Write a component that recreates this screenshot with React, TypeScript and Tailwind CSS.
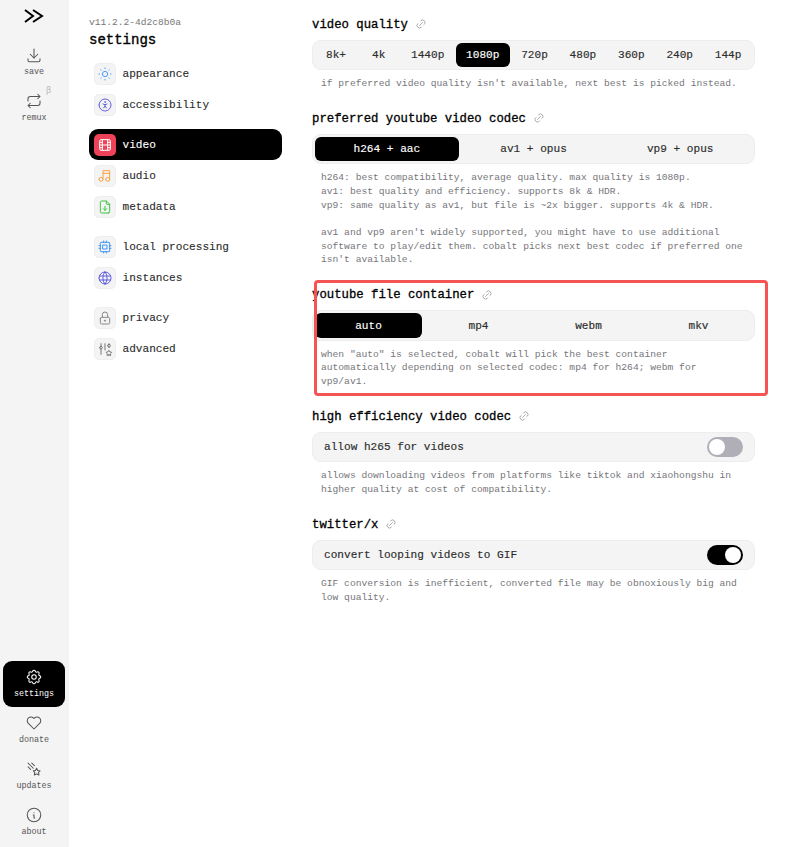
import type { ReactNode } from 'react';
import {
  TbAccessible, TbAdjustmentsStar, TbComet, TbCpu, TbDownload, TbFileDownload, TbHeart,
  TbInfoCircle, TbLink, TbLock, TbMovie, TbMusic, TbRepeat, TbSettings, TbSun, TbWorld,
} from 'react-icons/tb';

const QUALITIES = ['8k+', '4k', '1440p', '1080p', '720p', '480p', '360p', '240p', '144p'];

function SideItem({ icon, label, active, beta }: { icon: ReactNode; label: string; active?: boolean; beta?: boolean }) {
  return (
    <div className={`relative mx-[3px] flex h-[46px] flex-col items-center justify-center gap-[3px] rounded-[9px] text-[8.4px] leading-[11px] ${active ? 'bg-black text-white' : 'text-[#555]'}`}>
      {icon}
      <span>{label}</span>
      {beta && <span className="absolute right-[14px] top-[1px] text-[8.5px] leading-[10px] text-[#b5b5b5]">β</span>}
    </div>
  );
}

function NavItem({ icon, label, active, color }: { icon: ReactNode; label: string; active?: boolean; color: string }) {
  return (
    <div className={`flex h-[31px] items-center gap-[7px] rounded-[9px] pl-[4.5px] text-[11.1px] [-webkit-text-stroke:0.12px_currentColor] ${active ? 'bg-black text-white' : 'text-[#2c2c2c]'}`}>
      <div className={`flex h-[22px] w-[22px] items-center justify-center rounded-[5px] border ${color}`}>
        {icon}
      </div>
      <span className="pt-[2px]">{label}</span>
    </div>
  );
}

function Heading({ children }: { children: string }) {
  return (
    <div className="flex h-[16px] items-center gap-[7px] text-[12.3px] leading-[16px] text-black [-webkit-text-stroke:0.3px_currentColor]">
      <span className="pt-[1px]">{children}</span>
      <TbLink size={12} strokeWidth={1.4} className="text-[#888]" />
    </div>
  );
}

function Switcher({ items, selected }: { items: string[]; selected: string }) {
  return (
    <div className="mt-[7.5px] flex h-[30.5px] gap-[3px] rounded-[9px] border border-[#ededed] bg-[#f4f4f4] p-[2px]">
      {items.map((item) => (
        <div
          key={item}
          className={`flex flex-auto basis-0 items-center justify-center rounded-[6px] pt-[1px] text-[11.1px] [-webkit-text-stroke:0.15px_currentColor] ${item === selected ? 'bg-black text-white' : 'text-[#2c2c2c]'}`}
        >
          {item}
        </div>
      ))}
    </div>
  );
}

function Toggle({ label, on }: { label: string; on?: boolean }) {
  return (
    <div className="mt-[7.5px] flex h-[30.5px] items-center justify-between rounded-[9px] border border-[#ededed] bg-[#f4f4f4] px-[11px] text-[11.1px] text-[#2c2c2c] [-webkit-text-stroke:0.15px_currentColor]">
      <span className="pt-[1px]">{label}</span>
      <div className={`flex h-[20px] w-[36px] items-center rounded-full p-[2px] ${on ? 'justify-end bg-black' : 'bg-[#b0afb8]'}`}>
        <div className="h-[16px] w-[16px] rounded-full bg-white" />
      </div>
    </div>
  );
}

function Desc({ children }: { children: ReactNode }) {
  return <div className="mb-[19.5px] mt-[7px] px-[9px] text-[9.63px] leading-[13.7px] text-[#76767a]">{children}</div>;
}

export default function App() {
  return (
    <div className="flex min-h-screen bg-white font-['Liberation_Mono',monospace]">
      <aside className="flex w-[69px] shrink-0 flex-col justify-between bg-[#f4f4f4] pb-[2px] pr-[1px]">
        <div>
          <div className="flex h-[32px] items-center justify-center">
            <svg width="20" height="14" viewBox="0 0 20 14" fill="none" stroke="#000" strokeWidth="2">
              <path d="M1 1l8 6-8 6" />
              <path d="M9 1l9 6-9 6" />
            </svg>
          </div>
          <div className="mt-[7px] flex flex-col">
            <SideItem icon={<TbDownload size={18} strokeWidth={1.4} />} label="save" />
            <SideItem icon={<TbRepeat size={18} strokeWidth={1.4} />} label="remux" beta />
          </div>
        </div>
        <div className="flex flex-col">
          <SideItem icon={<TbSettings size={18} strokeWidth={1.4} />} label="settings" active />
          <SideItem icon={<TbHeart size={18} strokeWidth={1.4} />} label="donate" />
          <SideItem icon={<TbComet size={18} strokeWidth={1.4} />} label="updates" />
          <SideItem icon={<TbInfoCircle size={18} strokeWidth={1.4} />} label="about" />
        </div>
      </aside>

      <nav className="ml-[20px] w-[193px] shrink-0 pt-[16px]">
        <div className="text-[9.6px] leading-[13px] text-[#777]">v11.2.2-4d2c8b0a</div>
        <div className="mt-[2px] text-[14px] leading-[18px] text-black [-webkit-text-stroke:0.35px_currentColor]">settings</div>
        <div className="mt-[9px]">
          <NavItem color="border-[#eee] bg-[#f4f4f4] text-[#4d9cff]" icon={<TbSun size={16} strokeWidth={1.5} />} label="appearance" />
          <NavItem color="border-[#eee] bg-[#f4f4f4] text-[#5f5fdd]" icon={<TbAccessible size={16} strokeWidth={1.5} />} label="accessibility" />
        </div>
        <div className="mt-[9px]">
          <NavItem active color="border-transparent bg-[#ed4257] text-white" icon={<TbMovie size={16} strokeWidth={1.5} />} label="video" />
          <NavItem color="border-[#eee] bg-[#f4f4f4] text-[#f6a345]" icon={<TbMusic size={16} strokeWidth={1.5} />} label="audio" />
          <NavItem color="border-[#eee] bg-[#f4f4f4] text-[#3fc43f]" icon={<TbFileDownload size={16} strokeWidth={1.5} />} label="metadata" />
        </div>
        <div className="mt-[9px]">
          <NavItem color="border-[#eee] bg-[#f4f4f4] text-[#3d96f5]" icon={<TbCpu size={16} strokeWidth={1.5} />} label="local processing" />
          <NavItem color="border-[#eee] bg-[#f4f4f4] text-[#5f5fdd]" icon={<TbWorld size={16} strokeWidth={1.5} />} label="instances" />
        </div>
        <div className="mt-[9px]">
          <NavItem color="border-[#eee] bg-[#f4f4f4] text-[#888]" icon={<TbLock size={16} strokeWidth={1.5} />} label="privacy" />
          <NavItem color="border-[#eee] bg-[#f4f4f4] text-[#777]" icon={<TbAdjustmentsStar size={16} strokeWidth={1.5} />} label="advanced" />
        </div>
      </nav>

      <main className="ml-[30px] w-[443px] shrink-0 pt-[16px]">
        <Heading>video quality</Heading>
        <div className="mt-[7.5px] flex h-[30.5px] justify-between rounded-[9px] border border-[#ededed] bg-[#f4f4f4] p-[2px]">
          {QUALITIES.map((q) => (
            <div
              key={q}
              className={`flex min-w-[42px] items-center justify-center rounded-[6px] px-[10.5px] pt-[1px] text-[11.1px] [-webkit-text-stroke:0.15px_currentColor] ${q === '1080p' ? 'bg-black text-white' : 'text-[#2c2c2c]'}`}
            >
              {q}
            </div>
          ))}
        </div>
        <Desc>if preferred video quality isn't available, next best is picked instead.</Desc>

        <Heading>preferred youtube video codec</Heading>
        <Switcher items={['h264 + aac', 'av1 + opus', 'vp9 + opus']} selected="h264 + aac" />
        <Desc>
          h264: best compatibility, average quality. max quality is 1080p.<br />
          av1: best quality and efficiency. supports 8k &amp; HDR.<br />
          vp9: same quality as av1, but file is ~2x bigger. supports 4k &amp; HDR.<br />
          <br />
          av1 and vp9 aren't widely supported, you might have to use additional<br />
          software to play/edit them. cobalt picks next best codec if preferred one<br />
          isn't available.
        </Desc>

        <div className="relative">
          <Heading>youtube file container</Heading>
          <Switcher items={['auto', 'mp4', 'webm', 'mkv']} selected="auto" />
          <Desc>
            when "auto" is selected, cobalt will pick the best container<br />
            automatically depending on selected codec: mp4 for h264; webm for<br />
            vp9/av1.
          </Desc>
          {/* red highlight drawn over the section */}
          <div className="absolute left-[1.5px] top-[-7px] h-[116.5px] w-[454px] rounded-[4px] border-[3px] border-[#f55454]" />
        </div>

        <Heading>high efficiency video codec</Heading>
        <Toggle label="allow h265 for videos" />
        <Desc>
          allows downloading videos from platforms like tiktok and xiaohongshu in<br />
          higher quality at cost of compatibility.
        </Desc>

        <Heading>twitter/x</Heading>
        <Toggle label="convert looping videos to GIF" on />
        <Desc>
          GIF conversion is inefficient, converted file may be obnoxiously big and<br />
          low quality.
        </Desc>
      </main>
    </div>
  );
}
